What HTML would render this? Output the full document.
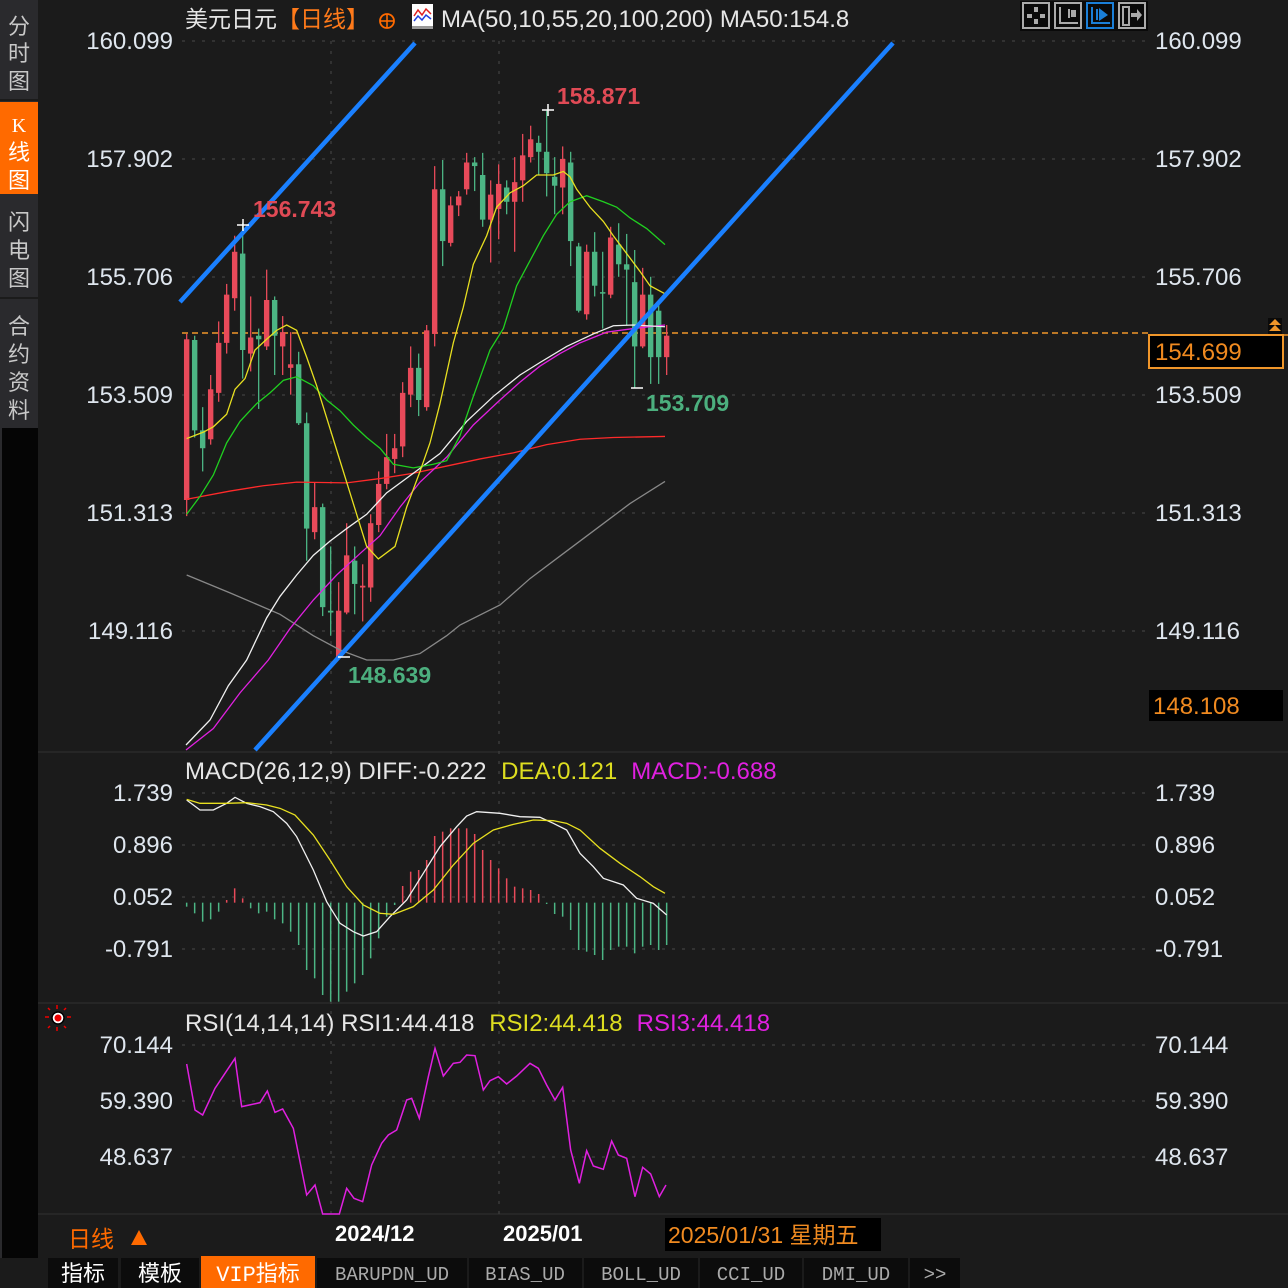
<!DOCTYPE html>
<html><head><meta charset="utf-8"><style>
html,body{margin:0;padding:0;background:#1b1b1b;}
body{width:1288px;height:1288px;overflow:hidden;position:relative;font-family:"Liberation Sans","Noto Sans CJK SC",sans-serif;}
svg{position:absolute;left:0;top:0}
</style></head><body>
<svg id="s" width="1288" height="1288" xmlns="http://www.w3.org/2000/svg" font-family="Liberation Sans, Noto Sans CJK SC, sans-serif">
<rect width="1288" height="1288" fill="#1b1b1b"/>
<rect x="0" y="0" width="38" height="1258" fill="#2a2a2d"/>
<rect x="2" y="428" width="36" height="830" fill="#050505"/>
<rect x="0" y="102" width="38" height="92" fill="#ff6a00"/>
<line x1="0" y1="100" x2="38" y2="100" stroke="#1b1b1b" stroke-width="2"/>
<line x1="0" y1="298" x2="38" y2="298" stroke="#1b1b1b" stroke-width="2"/>
<g font-size="22" fill="#c8c8c8" text-anchor="middle">
<text x="19" y="34">分</text><text x="19" y="61">时</text><text x="19" y="89">图</text>
<text x="19" y="132" fill="#fff" font-family="Liberation Serif,serif" font-size="20">K</text><text x="19" y="160" fill="#fff">线</text><text x="19" y="188" fill="#fff">图</text>
<text x="19" y="230">闪</text><text x="19" y="258">电</text><text x="19" y="286">图</text>
<text x="19" y="334">合</text><text x="19" y="362">约</text><text x="19" y="390">资</text><text x="19" y="418">料</text>
</g>
<line x1="38" y1="752" x2="1288" y2="752" stroke="#262626" stroke-width="2"/>
<line x1="38" y1="1003" x2="1288" y2="1003" stroke="#262626" stroke-width="2"/>
<line x1="38" y1="1214" x2="1288" y2="1214" stroke="#262626" stroke-width="2"/>
<g id="grid" stroke="#3a3a3a" stroke-width="1.5" stroke-dasharray="3,7"></g>
<text x="185" y="27" font-size="23" fill="#e6e6e6">美元日元<tspan fill="#ff7a1a">【日线】</tspan></text>
<circle cx="387" cy="21" r="7" fill="none" stroke="#ff6a00" stroke-width="1.8"/><line x1="380" y1="21" x2="394" y2="21" stroke="#ff6a00" stroke-width="1.6"/><line x1="387" y1="14" x2="387" y2="28" stroke="#ff6a00" stroke-width="1.6"/>
<rect x="412" y="4" width="21" height="22" fill="#fff"/><rect x="412" y="26" width="21" height="3" fill="#999"/>
<polyline points="414,16 418,10 422,15 426,9 431,14" fill="none" stroke="#e02020" stroke-width="1.5"/><polyline points="414,21 418,16 422,20 426,15 431,19" fill="none" stroke="#2040e0" stroke-width="1.5"/>
<text x="441" y="27" font-size="24" fill="#e6e6e6">MA(50,10,55,20,100,200) MA50:154.8</text>
<rect x="1020" y="1" width="128" height="30" fill="#0a0a0a"/>
<g fill="none" stroke-width="2">
<rect x="1023" y="3" width="26" height="25" stroke="#aaa"/><rect x="1055" y="3" width="26" height="25" stroke="#aaa"/><rect x="1087" y="3" width="26" height="25" stroke="#1a7fd8"/><rect x="1119" y="3" width="26" height="25" stroke="#aaa"/>
</g>
<g fill="#aaa"><rect x="1034" y="7" width="4" height="5"/><rect x="1034" y="19" width="4" height="5"/><rect x="1027" y="14" width="5" height="4"/><rect x="1040" y="14" width="5" height="4"/>
<rect x="1059" y="7" width="2" height="17"/><rect x="1059" y="22" width="19" height="2"/><rect x="1068" y="9" width="2" height="9"/><rect x="1071" y="10" width="5" height="7"/>
<rect x="1123" y="7" width="6" height="18" fill="none" stroke="#aaa" stroke-width="2"/><polygon points="1131,13 1137,13 1137,9 1142,15 1137,21 1137,17 1131,17"/></g>
<g fill="#1a7fd8"><rect x="1091" y="7" width="2" height="17"/><rect x="1091" y="22" width="19" height="2"/><rect x="1096" y="9" width="2" height="11"/><polygon points="1099,8 1108,15 1099,21"/></g>
<g font-size="24" fill="#dfe6ee">
<g text-anchor="end">
<text x="173" y="49">160.099</text><text x="173" y="167">157.902</text><text x="173" y="285">155.706</text><text x="173" y="403">153.509</text><text x="173" y="521">151.313</text><text x="173" y="639">149.116</text>
<text x="173" y="801">1.739</text><text x="173" y="853">0.896</text><text x="173" y="905">0.052</text><text x="173" y="957">-0.791</text>
<text x="173" y="1053">70.144</text><text x="173" y="1109">59.390</text><text x="173" y="1165">48.637</text>
</g>
<text x="1155" y="49">160.099</text><text x="1155" y="167">157.902</text><text x="1155" y="285">155.706</text><text x="1155" y="403">153.509</text><text x="1155" y="521">151.313</text><text x="1155" y="639">149.116</text>
<text x="1155" y="801">1.739</text><text x="1155" y="853">0.896</text><text x="1155" y="905">0.052</text><text x="1155" y="957">-0.791</text>
<text x="1155" y="1053">70.144</text><text x="1155" y="1109">59.390</text><text x="1155" y="1165">48.637</text>
</g>
<line x1="182" y1="333" x2="1148" y2="333" stroke="#f0962a" stroke-width="1.5" stroke-dasharray="6,4"/>
<line x1="1148" y1="335" x2="1288" y2="335" stroke="#f0962a" stroke-width="1.5"/>
<rect x="1149" y="335" width="134" height="33" fill="#000" stroke="#f0962a" stroke-width="2"/>
<text x="1155" y="360" font-size="24" fill="#f08a20">154.699</text>
<rect x="1268" y="318" width="14" height="16" fill="#0a0a0a"/><polygon points="1275,319 1281,325 1269,325" fill="#f0962a"/><polygon points="1275,325 1281,331 1269,331" fill="#f0962a"/>
<rect x="1149" y="690" width="134" height="31" fill="#000"/>
<text x="1153" y="714" font-size="24" fill="#f08a20">148.108</text>
<g id="candles"></g>
<g transform="translate(180,100) scale(0.33333,0.357143)" fill="none" stroke-width="1.3">
<polyline vector-effect="non-scaling-stroke" stroke="#888" points="20,1330 150,1380 300,1440 400,1500 480,1540 560,1568 640,1568 720,1550 800,1500 840,1470 960,1414 1050,1340 1150,1270 1250,1200 1350,1130 1455,1068"/>
<polyline vector-effect="non-scaling-stroke" stroke="#ff2a2a" points="20,1118 150,1095 250,1080 350,1070 500,1072 600,1060 700,1045 800,1025 900,1005 1000,988 1100,965 1200,950 1300,945 1455,942"/>
<polyline vector-effect="non-scaling-stroke" stroke="#e020e0" points="18,1820 100,1760 180,1660 265,1568 330,1480 400,1400 470,1330 540,1270 600,1220 660,1140 720,1070 800,1000 880,910 960,840 1020,790 1080,745 1140,710 1200,680 1280,650 1360,640 1455,630"/>
<polyline vector-effect="non-scaling-stroke" stroke="#f0f0f0" points="18,1806 90,1736 145,1640 200,1568 260,1450 300,1390 350,1330 400,1275 450,1235 500,1200 560,1160 620,1100 700,1045 780,990 860,900 940,830 1020,770 1080,735 1160,690 1240,655 1300,632 1360,630 1455,635"/>
<polyline vector-effect="non-scaling-stroke" stroke="#20d020" points="20,1160 60,1110 100,1050 140,960 180,900 230,850 270,820 310,785 350,775 400,800 440,840 480,870 520,910 560,945 600,975 640,1020 700,1030 760,1020 800,1010 840,940 880,830 930,700 970,640 1010,520 1050,450 1090,380 1130,320 1170,285 1220,268 1270,285 1310,300 1350,330 1400,360 1455,405"/>
<polyline vector-effect="non-scaling-stroke" stroke="#e8e020" points="20,948 70,930 100,915 140,880 165,810 195,780 225,700 260,670 290,645 320,630 350,645 380,720 410,800 440,890 470,980 500,1070 530,1160 560,1250 595,1285 645,1250 680,1140 720,1040 750,960 780,850 820,680 850,580 880,460 920,380 950,300 990,260 1030,240 1070,210 1120,210 1150,200 1170,215 1190,250 1230,300 1270,340 1300,380 1340,430 1380,480 1410,520 1460,545"/>
</g>
<line x1="180" y1="302" x2="415" y2="43" stroke="#1a80ff" stroke-width="4.5"/>
<line x1="255" y1="750" x2="893" y2="43" stroke="#1a80ff" stroke-width="4.5"/>
<g stroke="#fff" stroke-width="1.5"><line x1="237" y1="225" x2="249" y2="225"/><line x1="243" y1="219" x2="243" y2="231"/>
<line x1="542" y1="110" x2="554" y2="110"/><line x1="548" y1="104" x2="548" y2="116"/>
<line x1="631" y1="388" x2="643" y2="388"/><line x1="338" y1="657" x2="350" y2="657"/></g>
<g font-size="23" font-weight="bold"><text x="253" y="217" fill="#e04a55">156.743</text><text x="557" y="104" fill="#e04a55">158.871</text>
<text x="646" y="411" fill="#4caf7e">153.709</text><text x="348" y="683" fill="#4caf7e">148.639</text></g>
<text x="185" y="779" font-size="24" fill="#e6e6e6">MACD(26,12,9) DIFF:-0.222 <tspan fill="#dede20" dx="8">DEA:0.121</tspan><tspan fill="#e020e0" dx="14">MACD:-0.688</tspan></text>
<g id="macd"></g>
<g transform="translate(180,760) scale(0.33333)" fill="none" stroke-width="1.3">
<polyline vector-effect="non-scaling-stroke" stroke="#f0f0f0" points="20,120 60,150 100,150 140,130 165,112 200,130 240,140 280,155 320,190 350,230 400,330 440,425 480,490 520,515 550,528 590,515 630,470 680,420 730,340 780,260 830,200 860,168 890,155 960,160 1020,170 1080,172 1120,190 1160,210 1200,280 1240,320 1270,355 1330,375 1370,415 1420,430 1460,465"/>
<polyline vector-effect="non-scaling-stroke" stroke="#e8e020" points="20,118 60,130 100,130 140,130 200,128 260,135 300,145 345,165 400,225 450,300 500,380 550,435 600,460 640,463 700,440 760,390 820,315 880,250 940,210 1000,193 1060,180 1120,182 1160,190 1200,210 1260,265 1320,310 1380,350 1420,380 1455,400"/>
<polyline vector-effect="non-scaling-stroke" stroke="#e020e0" stroke-width="1.5" points="20,912 45,1050 68,1065 105,985 165,895 185,1040 240,1028 262,993 285,1057 308,1047 340,1105 380,1305 405,1275 428,1362 478,1362 500,1285 522,1315 548,1325 575,1215 605,1150 625,1125 650,1110 680,1020 695,1015 718,1075 745,950 765,865 790,948 820,910 840,907 860,885 885,887 910,990 930,962 955,950 980,972 1010,948 1050,910 1075,925 1100,975 1125,1020 1148,982 1172,1170 1198,1270 1220,1172 1240,1218 1270,1228 1295,1143 1315,1185 1340,1195 1365,1310 1388,1222 1412,1242 1438,1310 1458,1275"/>
</g>
<g><circle cx="58" cy="1018" r="6" fill="#fff" stroke="#000" stroke-width="1.5"/><circle cx="58" cy="1018" r="3.5" fill="#e00"/>
<g stroke="#e00" stroke-width="1.5"><line x1="45" y1="1017" x2="49" y2="1017"/><line x1="67" y1="1017" x2="71" y2="1017"/><line x1="57" y1="1005" x2="57" y2="1009"/><line x1="57" y1="1027" x2="57" y2="1031"/><line x1="48" y1="1008" x2="50" y2="1010"/><line x1="66" y1="1008" x2="64" y2="1010"/><line x1="48" y1="1028" x2="50" y2="1026"/><line x1="66" y1="1028" x2="64" y2="1026"/></g></g>
<text x="185" y="1031" font-size="24" fill="#e6e6e6">RSI(14,14,14) RSI1:44.418 <tspan fill="#dede20" dx="8">RSI2:44.418</tspan><tspan fill="#e020e0" dx="14">RSI3:44.418</tspan></text>
<text x="68" y="1247" font-size="23" fill="#ff6a00">日线</text><polygon points="131,1245 139,1230 147,1245" fill="#ff6a00"/>
<g font-size="22" font-weight="bold" fill="#fff"><text x="335" y="1241">2024/12</text><text x="503" y="1241">2025/01</text></g>
<rect x="665" y="1218" width="216" height="33" fill="#000"/>
<text x="668" y="1243" font-size="23" fill="#f08a20">2025/01/31 星期五</text>
<rect x="38" y="1256" width="1250" height="32" fill="#1b1b1b"/>
<g font-family="Liberation Mono, Noto Sans CJK SC, monospace" font-size="20">
<rect x="48" y="1258" width="70" height="30" fill="#0c0c0c"/><text x="83" y="1281" fill="#fff" text-anchor="middle" font-size="22">指标</text>
<rect x="121" y="1258" width="78" height="30" fill="#0c0c0c"/><text x="160" y="1281" fill="#fff" text-anchor="middle" font-size="22">模板</text>
<rect x="201" y="1256" width="114" height="32" fill="#ff6a00"/><text x="258" y="1281" fill="#fff" text-anchor="middle" font-size="22">VIP指标</text>
<rect x="317" y="1258" width="150" height="30" fill="#0c0c0c"/><text x="392" y="1280" fill="#aaa" text-anchor="middle" font-size="19">BARUPDN_UD</text>
<rect x="469" y="1258" width="113" height="30" fill="#0c0c0c"/><text x="525" y="1280" fill="#aaa" text-anchor="middle" font-size="19">BIAS_UD</text>
<rect x="584" y="1258" width="114" height="30" fill="#0c0c0c"/><text x="641" y="1280" fill="#aaa" text-anchor="middle" font-size="19">BOLL_UD</text>
<rect x="700" y="1258" width="102" height="30" fill="#0c0c0c"/><text x="751" y="1280" fill="#aaa" text-anchor="middle" font-size="19">CCI_UD</text>
<rect x="804" y="1258" width="104" height="30" fill="#0c0c0c"/><text x="856" y="1280" fill="#aaa" text-anchor="middle" font-size="19">DMI_UD</text>
<rect x="910" y="1258" width="50" height="30" fill="#0c0c0c"/><text x="935" y="1280" fill="#aaa" text-anchor="middle" font-size="19">&gt;&gt;</text>
</g>
</svg>
<script>
var NS="http://www.w3.org/2000/svg";
function el(p,t,a){var e=document.createElementNS(NS,t);for(var k in a)e.setAttribute(k,a[k]);p.appendChild(e);return e;}
var g=document.getElementById("grid");
[41,159,277,395,513,631,793,845,897,949,1045,1101,1157].forEach(function(y){el(g,"line",{x1:182,y1:y,x2:1148,y2:y});});
[331,499].forEach(function(x){el(g,"line",{x1:x,y1:41,x2:x,y2:1214});});
var C=[["R",670,1120,655,1165],["G",672,925,660,945],["G",925,975,860,1040],["R",810,950,770,965],["R",680,820,620,845],["R",545,680,515,710],["R",425,555,380,590],["G",430,700,345,780],["R",665,710,550,760],["G",660,670,640,865],["R",560,690,475,700],["G",560,660,550,770],["R",650,690,605,770],["R",740,750,650,825],["G",740,905,705,910],["G",905,1200,875,1290],["R",1140,1210,1070,1230],["G",1140,1420,1130,1445],["G",1430,1435,1250,1500],["R",1430,1560,1350,1568],["R",1275,1435,1185,1440],["G",1290,1355,1250,1440],["R",1360,1365,1300,1460],["R",1185,1365,1160,1405],["R",1075,1190,1040,1210],["R",1000,1075,935,1090],["R",975,1005,935,1045],["R",820,970,790,1000],["R",750,825,690,860],["G",750,840,710,885],["R",645,860,630,870],["R",250,655,185,690],["G",250,395,168,465],["R",295,400,270,410],["R",270,295,255,325],["R",175,250,148,265],["G",175,185,160,255],["G",210,335,148,355],["R",265,335,225,455],["R",235,305,180,390],["G",245,285,225,320],["R",230,285,160,425],["R",155,225,95,285],["R",110,160,72,175],["G",120,145,100,210],["G",145,205,30,270],["G",215,240,160,320],["R",165,245,130,320],["G",175,395,145,465],["G",410,590,400,595],["R",425,600,405,615],["G",425,520,370,550],["G",538,542,425,640],["R",385,545,355,555],["G",405,460,345,495],["G",460,475,375,630],["G",510,690,420,805],["R",545,690,470,695],["G",545,720,495,795],["G",590,720,560,795],["R",660,720,630,770]];
var cg=document.getElementById("candles");
C.forEach(function(c,i){var x=180+(20+24*i)/3;var col=c[0]=="R"?"#e84a5a":"#4cb584";
var y=function(z){return 100+z/2.8;};
el(cg,"line",{x1:x,y1:y(c[3]),x2:x,y2:y(c[4]),stroke:col,"stroke-width":1.3});
var h=Math.max(1.5,y(c[2])-y(c[1]));
el(cg,"rect",{x:x-2.7,y:y(c[1]),width:5.4,height:h,fill:col});});
var M=[440,460,485,478,455,420,385,415,445,460,455,478,490,515,555,630,655,705,725,725,695,670,645,595,535,470,435,378,335,330,300,228,215,205,205,205,222,270,300,325,355,380,385,390,402,432,462,470,510,570,575,585,600,570,560,560,580,560,555,570,555];
var mg=document.getElementById("macd");
M.forEach(function(v,i){var x=180+(20+24*i)/3;var b=760+428/3;var yy=760+v/3;var col=(i>=5&&i<=7)||(i>=27&&i<=44)?"#e84a5a":"#4cb584";
el(mg,"line",{x1:x,y1:b,x2:x,y2:yy,stroke:col,"stroke-width":1.5});});
</script>
</body></html>
